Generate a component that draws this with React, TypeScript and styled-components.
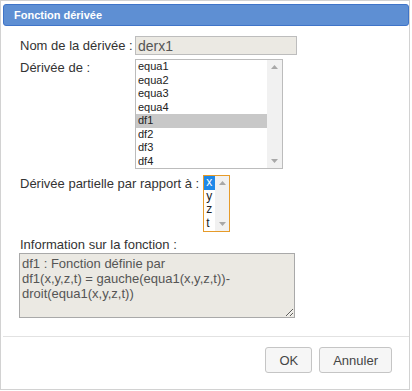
import React from "react";
import styled, { createGlobalStyle } from "styled-components";

const GlobalStyle = createGlobalStyle`
  body {
    margin: 0;
    background: #fff;
    font-family: "Liberation Sans", Arial, sans-serif;
  }
`;

const sources = ["equa1", "equa2", "equa3", "equa4", "df1", "df2", "df3", "df4"];
const variables = ["x", "y", "z", "t"];

const Arrow = ({ up }: { up?: boolean }) => (
  <svg width="7" height="4" viewBox="0 0 7 4">
    <polygon points={up ? "0,4 7,4 3.5,0" : "0,0 7,0 3.5,4"} fill="#a8a8a8" />
  </svg>
);

const ListBox = ({
  items,
  selected,
  width,
  height,
  focus,
  fontSize,
}: {
  items: string[];
  selected: string;
  width: number;
  height: number;
  focus?: boolean;
  fontSize: number;
}) => (
  <Box $w={width} $h={height} $focus={focus}>
    <Options>
      {items.map((item) => (
        <Option key={item} $sel={item === selected} $focus={focus} $size={fontSize}>
          {item}
        </Option>
      ))}
    </Options>
    <ScrollBar $w={focus ? 14 : 15}>
      <Arrow up />
      <Arrow />
    </ScrollBar>
  </Box>
);

const App = () => {
  return (
    <>
      <GlobalStyle />
      <Dialog>
        <TitleBar>Fonction dérivée</TitleBar>
        <Content>
          <Row>
            <Label $w={115}>Nom de la dérivée :</Label>
            <NameInput readOnly value="derx1" />
          </Row>
          <Row $gap={4}>
            <Label $w={115} $top={1}>Dérivée de :</Label>
            <ListBox items={sources} selected="df1" width={148} height={110} fontSize={11} />
          </Row>
          <Row $gap={6}>
            <Label $top={1}>Dérivée partielle par rapport à :</Label>
            <Spacer />
            <ListBox items={variables} selected="x" width={27} height={57} fontSize={12} focus />
          </Row>
          <InfoLabel>Information sur la fonction :</InfoLabel>
          <InfoText
            readOnly
            value={"df1 : Fonction définie par\ndf1(x,y,z,t) = gauche(equa1(x,y,z,t))-droit(equa1(x,y,z,t))"}
          />
        </Content>
        <ButtonPane>
          <Button>OK</Button>
          <Button>Annuler</Button>
        </ButtonPane>
      </Dialog>
    </>
  );
};

export default App;

const Dialog = styled.div`
  width: 410px;
  height: 390px;
  box-sizing: border-box;
  border: 1px solid #d2d2d2;
  padding: 3px 0 0 2px;
  display: flex;
  flex-direction: column;
`;

const TitleBar = styled.div`
  height: 22px;
  box-sizing: border-box;
  border: 1px solid #3f74c8;
  border-radius: 3px;
  background: #5e8fd3;
  color: #fff;
  font-size: 11px;
  font-weight: bold;
  display: flex;
  align-items: center;
  padding-left: 10px;
`;

const Content = styled.div`
  display: flex;
  flex-direction: column;
  padding: 10px 0 0 16px;
  color: #333;
  font-size: 13px;
`;

const Row = styled.div<{ $gap?: number }>`
  display: flex;
  align-items: ${(p) => (p.$gap ? "flex-start" : "center")};
  margin-top: ${(p) => p.$gap || 0}px;
`;

const Label = styled.div<{ $w?: number; $top?: number }>`
  ${(p) => (p.$w ? `width: ${p.$w}px;` : "")}
  margin-left: 1px;
  margin-top: ${(p) => p.$top || 0}px;
  line-height: 15px;
  white-space: nowrap;
`;

const Spacer = styled.span`
  width: 4px;
`;

const NameInput = styled.input`
  width: 162px;
  height: 19px;
  box-sizing: border-box;
  border: 1px solid #bdbdbd;
  background: #ebe9e3;
  color: #555;
  font-family: inherit;
  font-size: 14px;
  padding: 0 2px;
  margin: 0;
  outline: none;
`;

const Box = styled.div<{ $w: number; $h: number; $focus?: boolean }>`
  width: ${(p) => p.$w}px;
  height: ${(p) => p.$h}px;
  box-sizing: border-box;
  border: 1px solid ${(p) => (p.$focus ? "#e69b2a" : "#bcbcbc")};
  background: #fff;
  display: flex;
`;

const Options = styled.div`
  flex: 1;
  display: flex;
  flex-direction: column;
`;

const Option = styled.div<{ $sel: boolean; $focus?: boolean; $size: number }>`
  height: 13.5px;
  line-height: 13.5px;
  padding: 0 2px;
  font-size: ${(p) => p.$size}px;
  color: ${(p) => (p.$sel && p.$focus ? "#fff" : "#222")};
  background: ${(p) => (p.$sel ? (p.$focus ? "#1e88e8" : "#c8c8c8") : "transparent")};
`;

const ScrollBar = styled.div<{ $w: number }>`
  width: ${(p) => p.$w}px;
  background: #f1f1f1;
  display: flex;
  flex-direction: column;
  align-items: center;
  justify-content: space-between;
  padding: 5px 0;
  box-sizing: border-box;
`;

const InfoLabel = styled.div`
  margin: 5px 0 1px 1px;
  line-height: 15px;
`;

const InfoText = styled.textarea`
  width: 276px;
  height: 65px;
  box-sizing: border-box;
  margin: 0;
  border: 1px solid #a9a9a9;
  background: #ebe9e3;
  color: #555;
  font-family: inherit;
  font-size: 13px;
  line-height: 15px;
  padding: 2px 2px;
  outline: none;
  overflow: hidden;
`;

const ButtonPane = styled.div`
  margin-top: 18px;
  border-top: 1px solid #e2e2e2;
  padding: 10px 17px 0 0;
  display: flex;
  justify-content: flex-end;
  gap: 7px;
`;

const Button = styled.button`
  height: 26px;
  box-sizing: border-box;
  padding: 0 13px;
  border: 1px solid #c5c5c5;
  border-radius: 3px;
  background: #f6f6f6;
  color: #454545;
  font-family: inherit;
  font-size: 13px;
`;
